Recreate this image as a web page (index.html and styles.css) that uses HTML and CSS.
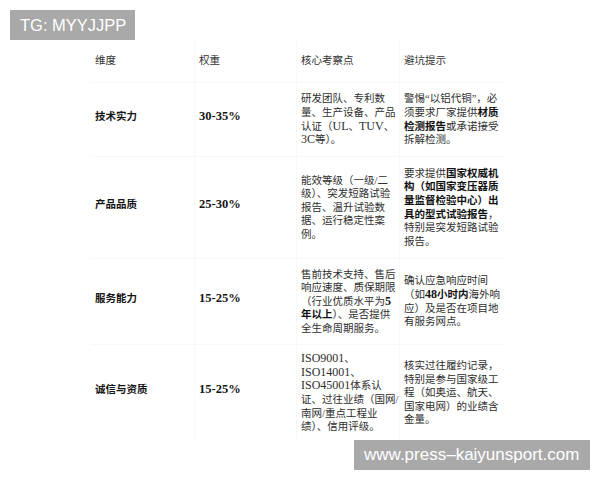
FILE: index.html
```html
<!DOCTYPE html>
<html lang="zh-CN">
<head>
<meta charset="utf-8">
<title>评估维度</title>
<link rel="stylesheet" href="styles.css">
</head>
<body>
<div class="badge">TG: MYYJJPP</div>
<div class="table">
  <div class="cell head">维度</div>
  <div class="cell head">权重</div>
  <div class="cell head">核心考察点</div>
  <div class="cell head last">避坑提示</div>

  <div class="cell label">技术实力</div>
  <div class="cell pct">30-35%</div>
  <div class="cell txt"><div class="in">研发团队、专利数<br>量、生产设备、产品<br>认证（<span class="en">UL</span>、<span class="en">TUV</span>、<br><span class="en">3C</span>等）。</div></div>
  <div class="cell txt last"><div class="in">警惕“以铝代铜”，必<br>须要求厂家提供<b>材质</b><br><b>检测报告</b>或承诺接受<br>拆解检测。</div></div>

  <div class="cell label">产品品质</div>
  <div class="cell pct">25-30%</div>
  <div class="cell txt"><div class="in">能效等级（一级/二<br>级）、突发短路试验<br>报告、温升试验数<br>据、运行稳定性案<br>例。</div></div>
  <div class="cell txt last"><div class="in">要求提供<b>国家权威机</b><br><b>构（如国家变压器质</b><br><b>量监督检验中心）出</b><br><b>具的型式试验报告</b>，<br>特别是突发短路试验<br>报告。</div></div>

  <div class="cell label">服务能力</div>
  <div class="cell pct">15-25%</div>
  <div class="cell txt"><div class="in">售前技术支持、售后<br>响应速度、质保期限<br>（行业优质水平为<b class="en">5</b><br><b>年以上</b>）、是否提供<br>全生命周期服务。</div></div>
  <div class="cell txt last"><div class="in">确认应急响应时间<br>（如<b><span class="en">48</span>小时内</b>海外响<br>应）及是否在项目地<br>有服务网点。</div></div>

  <div class="cell label nb">诚信与资质</div>
  <div class="cell pct nb">15-25%</div>
  <div class="cell txt nb"><div class="in"><span class="en">ISO9001</span>、<br><span class="en">ISO14001</span>、<br><span class="en">ISO45001</span>体系认<br>证、过往业绩（国网/<br>南网/重点工程业<br>绩）、信用评级。</div></div>
  <div class="cell txt last nb"><div class="in">核实过往履约记录，<br>特别是参与国家级工<br>程（如奥运、航天、<br>国家电网）的业绩含<br>金量。</div></div>
</div>
<div class="mark">www.press–kaiyunsport.com</div>
</body>
</html>
```

FILE: styles.css
```css
html, body {
  margin: 0;
  padding: 0;
  background: #ffffff;
}

body {
  width: 600px;
  height: 480px;
  position: relative;
  overflow: hidden;
  font-family: "Liberation Serif", "Noto Sans CJK SC", serif;
  color: #333333;
}

.badge {
  position: absolute;
  left: 10px;
  top: 10px;
  width: 125px;
  height: 30px;
  background: #a9a9a9;
  color: #ffffff;
  font-family: "Liberation Sans", Arial, sans-serif;
  font-size: 16.5px;
  line-height: 30px;
  padding-left: 10px;
  box-sizing: border-box;
}

.mark {
  position: absolute;
  left: 354px;
  top: 440px;
  width: 236px;
  height: 30px;
  background: #a9a9a9;
  color: #ffffff;
  font-family: "Liberation Sans", Arial, sans-serif;
  font-size: 17px;
  line-height: 30px;
  padding-left: 10px;
  box-sizing: border-box;
}

.table {
  margin: 40px 0 0 91px;
  display: grid;
  grid-template-columns: 104px 102px 103px 106px;
  grid-template-rows: 43px 74px 102px 86px 96px;
  width: 415px;
}

.cell {
  display: flex;
  align-items: center;
  padding-left: 4px;
  border-right: 1px solid #f8f8f8;
  border-bottom: 1px solid #f8f8f8;
  font-size: 10.5px;
  line-height: 13.6px;
}

.cell.last {
  border-right: none;
}

.cell.nb {
  border-bottom: none;
}

.head {
  color: #333333;
}

.label {
  font-weight: bold;
  color: #151515;
  padding-bottom: 6px;
}

.pct {
  font-weight: bold;
  color: #151515;
  font-size: 12.5px;
  padding-bottom: 6px;
}

.txt {
  color: #2e2e2e;
  white-space: nowrap;
}

.txt b {
  color: #111111;
}

.en {
  font-size: 12px;
}
```
